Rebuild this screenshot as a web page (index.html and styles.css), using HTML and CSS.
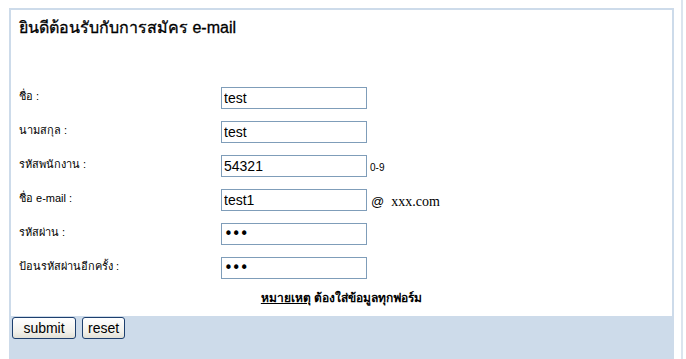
FILE: index.html
```html
<!DOCTYPE html>
<html lang="th">
<head>
  <meta charset="UTF-8">
  <title>สมัคร e-mail</title>
  <link rel="stylesheet" href="styles.css">
</head>
<body>
  <div class="frame">
    <form class="panel">
      <h1 class="title">ยินดีต้อนรับกับการสมัคร e-mail</h1>

      <div class="fields">
        <label class="label" for="fname">ชื่อ :</label>
        <div class="cell"><input class="text" id="fname" type="text" value="test"></div>

        <label class="label" for="lname">นามสกุล :</label>
        <div class="cell"><input class="text" id="lname" type="text" value="test"></div>

        <label class="label" for="empid">รหัสพนักงาน :</label>
        <div class="cell"><input class="text" id="empid" type="text" value="54321"><span class="hint">0-9</span></div>

        <label class="label" for="mail">ชื่อ e-mail :</label>
        <div class="cell"><input class="text" id="mail" type="text" value="test1"><span class="domain"><span class="at">@</span>xxx.com</span></div>

        <label class="label" for="pass">รหัสผ่าน :</label>
        <div class="cell"><input class="text secret" id="pass" type="password" value="abc"></div>

        <label class="label" for="pass2">ป้อนรหัสผ่านอีกครั้ง :</label>
        <div class="cell"><input class="text secret" id="pass2" type="password" value="abc"></div>
      </div>

      <p class="note"><u>หมายเหตุ</u> ต้องใส่ข้อมูลทุกฟอร์ม</p>

      <div class="actions">
        <button class="btn btn-submit" type="submit">submit</button>
        <button class="btn" type="reset">reset</button>
      </div>
    </form>
  </div>
</body>
</html>
```

FILE: styles.css
```css
html, body {
  margin: 0;
  padding: 0;
  height: 100%;
  overflow: hidden;
  background: #fff;
  font-family: "Liberation Sans", "Noto Sans", sans-serif;
}

.frame {
  width: 683px;
  height: 100%;
  padding: 8px 7px 0 9px;
  box-sizing: border-box;
  border-right: 2px solid #dbe4ee;
}

.panel {
  display: flex;
  flex-direction: column;
  height: 100%;
  border: 2px solid #cddbea;
  border-bottom: 0;
  box-sizing: border-box;
}

.title {
  margin: 0;
  padding: 8px 8px 0;
  font-size: 16px;
  line-height: 20px;
  font-weight: normal;
  -webkit-text-stroke: 0.3px #000;
  color: #000;
}

.fields {
  display: grid;
  grid-template-columns: 202px 1fr;
  grid-auto-rows: 34px;
  margin-top: 49px;
  padding-left: 8px;
}

.label {
  padding-top: 1px;
  font-size: 11px;
  line-height: 16px;
  color: #000;
}

.cell {
  display: flex;
  align-items: flex-start;
}

.text {
  width: 146px;
  height: 22px;
  box-sizing: border-box;
  margin: 0;
  padding: 0 2px;
  border: 1px solid #7f9db9;
  font-family: "Liberation Sans", sans-serif;
  font-size: 14px;
  color: #000;
}

.secret {
  font-family: "DejaVu Sans", sans-serif;
  font-size: 15px;
  letter-spacing: -1px;
}

.hint {
  margin: 6px 0 0 3px;
  font-size: 10px;
  line-height: 14px;
}

.domain {
  margin: 6px 0 0 4px;
  font-family: "Liberation Serif", serif;
  font-size: 14px;
  line-height: 14px;
}

.at {
  font-family: "Liberation Sans", sans-serif;
  font-size: 13px;
  margin-right: 7px;
}

.note {
  margin: 0;
  height: 25px;
  text-align: center;
  font-size: 12px;
  font-weight: bold;
  line-height: 14px;
}

.actions {
  flex: 1;
  display: flex;
  gap: 6px;
  padding: 1px;
  background: #cddbea;
  align-items: flex-start;
}

.btn {
  height: 22px;
  margin: 0;
  padding: 0 5px;
  border: 1px solid #1d3f6e;
  border-radius: 3px;
  background: linear-gradient(#fff, #f1f0ea 70%, #e2e0d6);
  font-family: "Liberation Sans", sans-serif;
  font-size: 14px;
  color: #000;
}

.btn-submit {
  width: 64px;
}
```
